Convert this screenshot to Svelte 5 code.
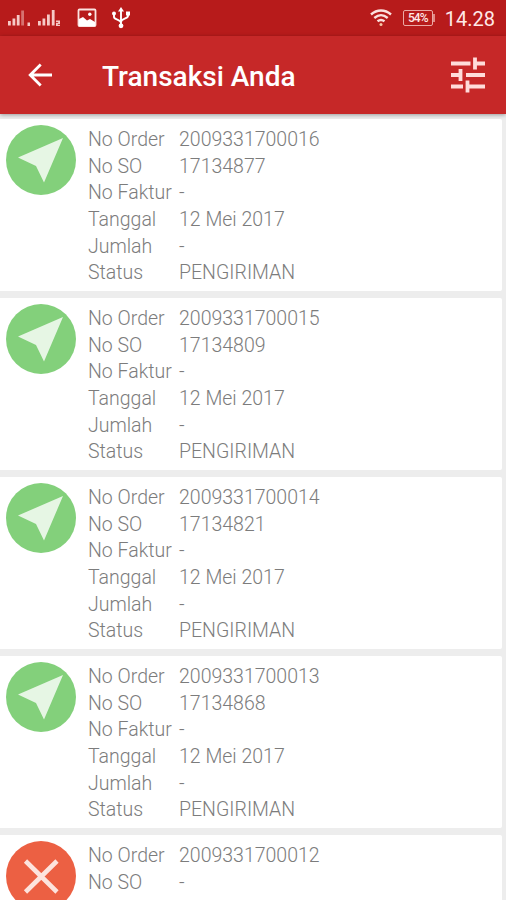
<script>
    const transaksi = [
        { order: "2009331700016", so: "17134877", faktur: "-", tanggal: "12 Mei 2017", jumlah: "-", status: "PENGIRIMAN" },
        { order: "2009331700015", so: "17134809", faktur: "-", tanggal: "12 Mei 2017", jumlah: "-", status: "PENGIRIMAN" },
        { order: "2009331700014", so: "17134821", faktur: "-", tanggal: "12 Mei 2017", jumlah: "-", status: "PENGIRIMAN" },
        { order: "2009331700013", so: "17134868", faktur: "-", tanggal: "12 Mei 2017", jumlah: "-", status: "PENGIRIMAN" },
        { order: "2009331700012", so: "-" },
    ];
</script>

<div class="screen">
    <div class="status-bar">
        <svg class="signals" width="56" height="22" viewBox="0 0 56 22" fill="#f6c9c6">
            <path d="M0 14h2.800v4.500H0zM4.500 11.500h2.800v7H4.500zM8.800 8h2.800v10.500H8.800z" />
            <path d="M13.200 3.500H16v15h-2.800z" opacity="0.5" />
            <path d="M19.500 15.500H22V19h-2.500z" />
            <path d="M30 14h2.800v4.500H30zM34.500 11.500h2.800v7h-2.800zM39 7.500h2.800v11H39zM43.800 3h2.800v15.500h-2.800z" />
            <path d="M48 13.500h4v3.500h-2.200v.8H52V19h-4v-3.200h2.200V15H48z" />
        </svg>
        <svg class="picture" width="20" height="20" viewBox="0 0 20 20">
            <rect x="1.500" y="1.500" width="17" height="16.500" rx="1" fill="none" stroke="#fbe3e1" stroke-width="1.800" />
            <path d="M2 11l4-2 4 3.500 3-1.500 5 3V18H2z" fill="#fff" />
            <circle cx="12.800" cy="6.300" r="1.700" fill="#fff" />
        </svg>
        <svg class="usb" width="20" height="22" viewBox="0 0 20 22">
            <path d="M10 3v16M3 7v3c0 3 7 2.500 7 6M17 6v3c0 3-7 2.500-7 6" fill="none" stroke="#fff" stroke-width="1.900" />
            <path d="M10 0l3 4.500H7z" fill="#fff" />
            <circle cx="3" cy="6.500" r="2" fill="#fff" />
            <path d="M15 4.500h4v4h-4z" fill="#fff" />
            <circle cx="10" cy="18.800" r="2.400" fill="#fff" />
        </svg>
        <svg class="wifi" width="22" height="18" viewBox="0 0 22 18" fill="none" stroke="#fbe0de" stroke-width="2.400">
            <path d="M1 5.500C7 .2 15 .2 21 5.500" />
            <path d="M4.300 9C8.500 5.400 13.500 5.400 17.700 9" />
            <path d="M7.500 12.300c2.200-1.700 4.800-1.700 7 0" />
            <circle cx="11" cy="15.600" r="1.500" fill="#f6c9a8" stroke="none" />
        </svg>
        <div class="battery">54%</div>
        <div class="nub"></div>
        <div class="clock">14.28</div>
    </div>

    <div class="toolbar">
        <svg class="back" width="25" height="24" viewBox="0 0 25 24" fill="none" stroke="#fff" stroke-width="2.800">
            <path d="M25 12H4M13.700 1.500L3.200 12l10.500 10.500" />
        </svg>
        <h1>Transaksi Anda</h1>
        <svg class="filter" width="36" height="36" viewBox="0 0 36 36" fill="none" stroke="#ffdcda" stroke-width="3.800">
            <path d="M1 6.500h19.500M25 6.500h10M25 .5v12" />
            <path d="M1 18h9M16 18h19M10.500 12v12" />
            <path d="M1 29.500h12M18 29.500h17M17.500 23.500v12" />
        </svg>
    </div>

    <div class="list">
        {#each transaksi as item}
            <div class="card">
                {#if item.status === "PENGIRIMAN"}
                    <svg class="icon" width="70" height="70" viewBox="0 0 70 70">
                        <circle cx="35" cy="35" r="35" fill="#83d07b" />
                        <path d="M57 13L38 57.500L30 41L12 32.500Z" fill="#e6f6e4" />
                    </svg>
                {:else}
                    <svg class="icon" width="70" height="70" viewBox="0 0 70 70">
                        <circle cx="35" cy="35" r="35" fill="#ec6043" />
                        <path d="M19.500 20L51 51M51 20L19.500 51" stroke="#fde3dd" stroke-width="4.600" />
                    </svg>
                {/if}
                <div class="detail">
                    <span>No Order</span><span>{item.order}</span>
                    <span>No SO</span><span>{item.so}</span>
                    {#if item.status}
                        <span>No Faktur</span><span>{item.faktur}</span>
                        <span>Tanggal</span><span>{item.tanggal}</span>
                        <span>Jumlah</span><span>{item.jumlah}</span>
                        <span>Status</span><span>{item.status}</span>
                    {/if}
                </div>
            </div>
        {/each}
    </div>
</div>

<style>
    :global(body) {
        overflow: hidden;
    }

    .screen {
        width: 506px;
        height: 900px;
        display: flex;
        flex-direction: column;
        overflow: hidden;
        background-color: #ededed;
        font-family: Roboto, sans-serif;
    }

    svg {
        flex-shrink: 0;
    }

    .status-bar {
        height: 36px;
        flex-shrink: 0;
        box-sizing: border-box;
        display: flex;
        align-items: center;
        padding: 0 11px 0 8px;
        background-color: #b71b1b;
        color: #ffe9e7;
    }

    .picture {
        margin-left: 13px;
    }

    .usb {
        margin-left: 14px;
    }

    .wifi {
        margin-left: auto;
    }

    .battery {
        width: 30px;
        height: 16px;
        box-sizing: border-box;
        margin-left: 11px;
        border: 1px solid #eba9a5;
        border-radius: 2px;
        font-size: 12px;
        font-weight: 500;
        line-height: 14px;
        letter-spacing: -1px;
        text-align: center;
    }

    .nub {
        width: 2px;
        height: 8px;
        background-color: #e08a86;
    }

    .clock {
        margin: 2px 0 0 10px;
        font-size: 20px;
        line-height: 24px;
    }

    .toolbar {
        height: 78px;
        flex-shrink: 0;
        box-sizing: border-box;
        display: flex;
        align-items: center;
        padding: 0 20px 0 27px;
        background-color: #c62828;
        box-shadow: 0 1px 4px rgba(0, 0, 0, 0.35);
        z-index: 1;
    }

    .toolbar h1 {
        margin: 3px 0 0 50px;
        color: #fff;
        font-size: 28px;
        font-weight: 500;
        line-height: 32px;
    }

    .filter {
        margin-left: auto;
    }

    .list {
        display: flex;
        flex-direction: column;
        row-gap: 7px;
        padding: 5px 4px 0 0;
    }

    .card {
        height: 172px;
        flex-shrink: 0;
        box-sizing: border-box;
        display: flex;
        padding: 6px;
        background-color: #fff;
        border-radius: 0 2px 2px 0;
    }

    .detail {
        display: grid;
        grid-template-columns: 91px auto;
        grid-auto-rows: 26.7px;
        align-content: start;
        margin: 2px 0 0 12px;
        color: #7c7c7c;
        font-size: 19.5px;
        font-weight: 300;
        line-height: 26.7px;
        white-space: nowrap;
    }
</style>
